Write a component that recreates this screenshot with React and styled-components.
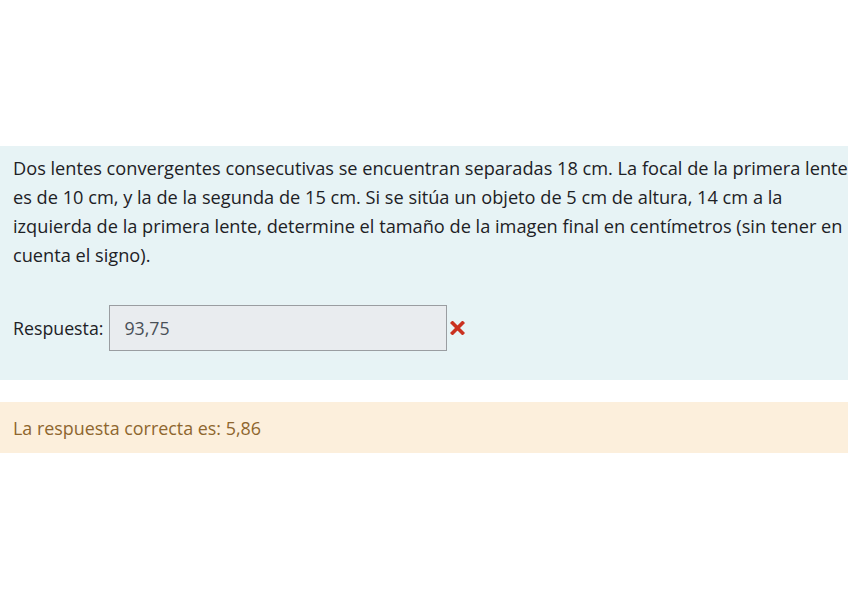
import React from "react";
import styled, { createGlobalStyle } from "styled-components";

const Global = createGlobalStyle`
  html, body {
    margin: 0;
    padding: 0;
    background: #fff;
    overflow: hidden;
  }
  body {
    font-family: "Open Sans", "Noto Sans", sans-serif;
    color: #1d2125;
  }
`;

const Page = styled.div`
  width: 848px;
  height: 599px;
  padding-top: 146px;
  box-sizing: border-box;
`;

const Formulation = styled.div`
  background: #e7f3f5;
  padding: 8px 0 29px 13px;
  box-sizing: border-box;
`;

const QuestionText = styled.p`
  margin: 0;
  font-size: 18.2px;
  line-height: 29px;
  color: #1d2125;
`;

const Line = styled.span`
  display: block;
  white-space: nowrap;
`;

const AnswerRow = styled.div`
  display: flex;
  align-items: center;
  margin-top: 35px;
`;

const Label = styled.label`
  font-size: 17.75px;
  margin-right: 6px;
`;

const AnswerInput = styled.div`
  width: 338px;
  height: 46px;
  box-sizing: border-box;
  background: #e9ecef;
  border: 1px solid #9a9da1;
  padding: 0 14px;
  display: flex;
  align-items: center;
  font-size: 17.75px;
  color: #495057;
`;

const WrongIcon = styled.svg`
  width: 15px;
  height: 14px;
  margin-left: 3px;
`;

const Feedback = styled.div`
  margin-top: 22px;
  background: #fcefdc;
  height: 51px;
  padding-left: 13px;
  display: flex;
  align-items: center;
  font-size: 17.9px;
  color: #8e662e;
`;

const lines = [
  "Dos lentes convergentes consecutivas se encuentran separadas 18 cm. La focal de la primera lente",
  "es de 10 cm, y la de la segunda de 15 cm. Si se sitúa un objeto de 5 cm de altura, 14 cm a la",
  "izquierda de la primera lente, determine el tamaño de la imagen final en centímetros (sin tener en",
  "cuenta el signo).",
];

export default function App() {
  return (
    <>
      <Global />
      <Page>
        <Formulation>
          <QuestionText>
            {lines.map((l) => (
              <Line key={l}>{l}</Line>
            ))}
          </QuestionText>
          <AnswerRow>
            <Label>Respuesta:</Label>
            <AnswerInput>93,75</AnswerInput>
            <WrongIcon viewBox="0 0 14 14" aria-label="Incorrecta">
              <path
                d="M2 2 L12 12 M12 2 L2 12"
                stroke="#ca3120"
                strokeWidth="3.6"
                strokeLinecap="square"
              />
            </WrongIcon>
          </AnswerRow>
        </Formulation>
        <Feedback>La respuesta correcta es: 5,86</Feedback>
      </Page>
    </>
  );
}
